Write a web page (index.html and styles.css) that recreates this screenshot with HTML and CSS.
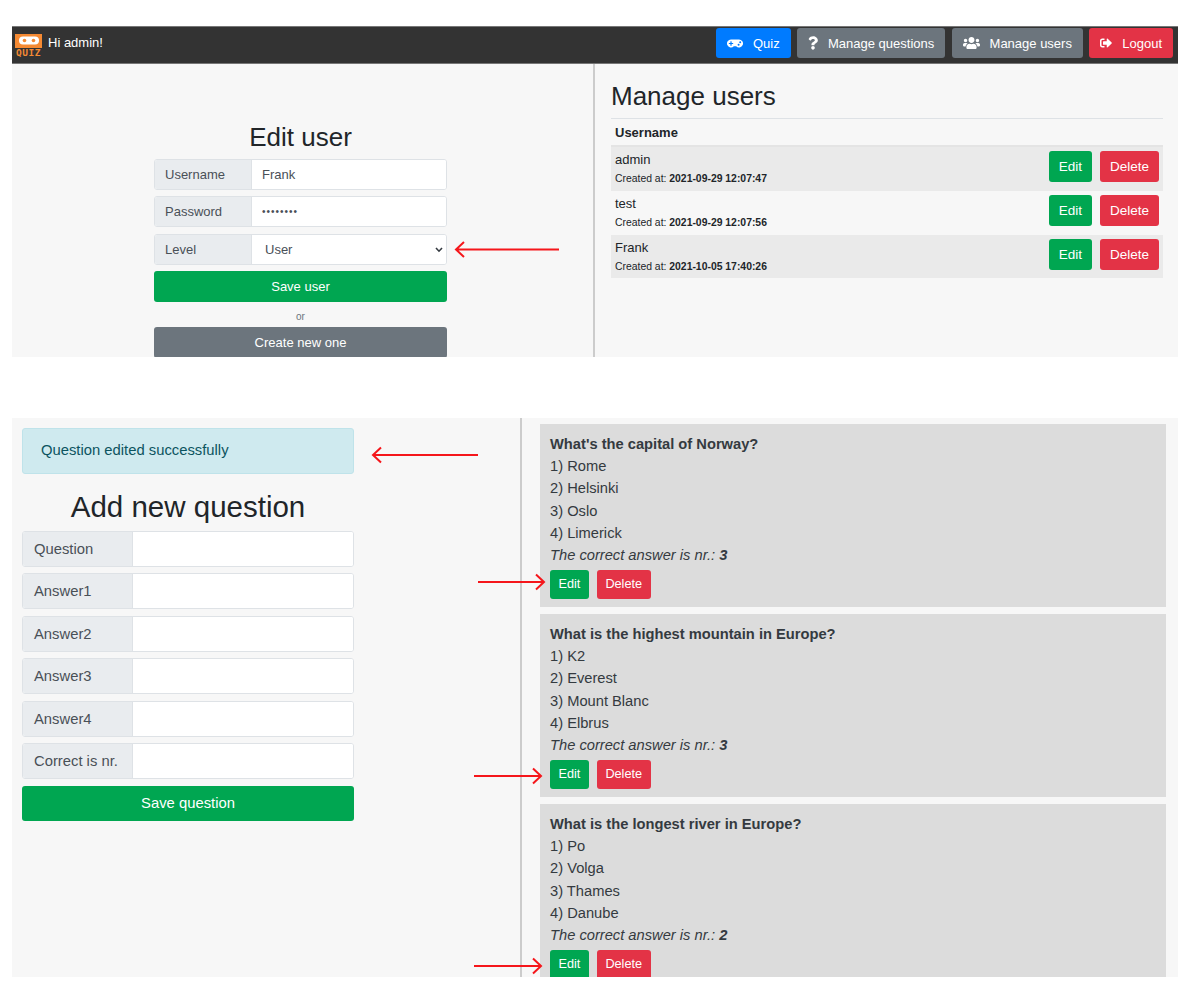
FILE: index.html
```html
<!DOCTYPE html>
<html lang="en">
<head>
  <meta charset="UTF-8">
  <title>Quiz admin</title>
  <link rel="stylesheet" href="styles.css">
</head>
<body>

  <!-- first screenshot: manage users -->
  <section class="panel panel-users">
    <nav class="navbar">
      <div class="brand">
        <div class="logo">
          <div class="logo-pad">
            <svg width="20" height="9" viewBox="0 0 20 9"><rect width="20" height="8" y="0.500" rx="4" fill="#fff"/><circle cx="5.500" cy="4.500" r="1.800" fill="#f58a33"/><circle cx="14.500" cy="4.500" r="1.800" fill="#f58a33"/></svg>
          </div>
          <div class="logo-text">QUIZ</div>
        </div>
        <span class="hello">Hi admin!</span>
      </div>
      <div class="nav-links">
        <a class="nav-btn blue">
          <svg class="icon" width="16" height="13" viewBox="0 0 640 512"><path d="M480.07 96H160a160 160 0 1 0 114.24 272h91.52A160 160 0 1 0 480.07 96zM248 268a12 12 0 0 1-12 12h-52v52a12 12 0 0 1-12 12h-24a12 12 0 0 1-12-12v-52H84a12 12 0 0 1-12-12v-24a12 12 0 0 1 12-12h52v-52a12 12 0 0 1 12-12h24a12 12 0 0 1 12 12v52h52a12 12 0 0 1 12 12zm216 76a40 40 0 1 1 40-40 40 40 0 0 1-40 40zm64-96a40 40 0 1 1 40-40 40 40 0 0 1-40 40z"/></svg>
          Quiz
        </a>
        <a class="nav-btn grey">
          <svg class="icon" width="10" height="14" viewBox="0 0 384 512"><path d="M202.021 0C122.202 0 70.503 32.703 29.914 91.026c-7.363 10.58-5.093 25.086 5.178 32.874l43.138 32.709c10.373 7.865 25.132 6.026 33.253-4.148 25.049-31.381 43.63-49.449 82.757-49.449 30.764 0 68.816 19.799 68.816 49.631 0 22.552-18.617 34.134-48.993 51.164-35.423 19.86-82.299 44.576-82.299 106.405V320c0 13.255 10.745 24 24 24h72.471c13.255 0 24-10.745 24-24v-5.773c0-42.86 125.268-44.645 125.268-160.627C377.504 66.256 286.902 0 202.021 0zM192 373.459c-38.196 0-69.271 31.075-69.271 69.271 0 38.195 31.075 69.27 69.271 69.27s69.271-31.075 69.271-69.271-31.075-69.27-69.271-69.27z"/></svg>
          Manage questions
        </a>
        <a class="nav-btn grey">
          <svg class="icon" width="17" height="14" viewBox="0 0 640 512"><path d="M96 224c35.3 0 64-28.7 64-64s-28.7-64-64-64-64 28.7-64 64 28.7 64 64 64zm448 0c35.3 0 64-28.7 64-64s-28.7-64-64-64-64 28.7-64 64 28.7 64 64 64zm32 32h-64c-17.6 0-33.5 7.1-45.1 18.6 40.3 22.1 68.9 62 75.1 109.4h66c17.7 0 32-14.3 32-32v-32c0-35.3-28.7-64-64-64zm-256 0c61.9 0 112-50.1 112-112S381.9 32 320 32 208 82.1 208 144s50.1 112 112 112zm76.8 32h-8.3c-20.8 10-43.9 16-68.5 16s-47.6-6-68.5-16h-8.3C179.6 288 128 339.6 128 403.2V432c0 26.5 21.5 48 48 48h288c26.5 0 48-21.5 48-48v-28.8c0-63.6-51.6-115.2-115.2-115.2zm-223.7-13.4C161.5 263.1 145.6 256 128 256H64c-35.3 0-64 28.7-64 64v32c0 17.7 14.3 32 32 32h65.9c6.3-47.4 34.9-87.3 75.2-109.4z"/></svg>
          Manage users
        </a>
        <a class="nav-btn red">
          <svg class="icon" width="12" height="12" viewBox="0 0 512 512"><path d="M497 273L329 441c-15 15-41 4.500-41-17v-96H152c-13.300 0-24-10.700-24-24v-96c0-13.300 10.700-24 24-24h136V88c0-21.400 25.900-32 41-17l168 168c9.300 9.400 9.300 24.600 0 34zM192 436v-40c0-6.600-5.400-12-12-12H96c-17.700 0-32-14.300-32-32V160c0-17.700 14.300-32 32-32h84c6.600 0 12-5.400 12-12V76c0-6.600-5.400-12-12-12H96c-53 0-96 43-96 96v192c0 53 43 96 96 96h84c6.600 0 12-5.400 12-12z"/></svg>
          Logout
        </a>
      </div>
    </nav>

    <div class="users-body">
      <div class="users-left">
        <form class="user-form">
          <h2 class="user-title">Edit user</h2>
          <div class="group">
            <label class="group-label">Username</label>
            <input class="group-input" type="text" value="Frank">
          </div>
          <div class="group">
            <label class="group-label">Password</label>
            <input class="group-input password" type="password" value="12345678">
          </div>
          <div class="group">
            <label class="group-label">Level</label>
            <div class="select-wrap">
              <select class="group-select"><option>User</option><option>Admin</option></select>
              <svg class="chevron" width="8" height="6" viewBox="0 0 8 6"><path d="M1 1l3 3.200L7 1" fill="none" stroke="#343a40" stroke-width="1.600"/></svg>
            </div>
          </div>
          <button type="button" class="btn-wide green">Save user</button>
          <div class="or">or</div>
          <button type="button" class="btn-wide dark-grey">Create new one</button>
        </form>
      </div>

      <div class="users-right">
        <h2 class="list-title">Manage users</h2>
        <div class="list-head">Username</div>
        <div class="user-row shaded">
          <div>
            <div class="user-name">admin</div>
            <div class="user-date">Created at: <b>2021-09-29 12:07:47</b></div>
          </div>
          <div class="row-btns"><a class="btn green">Edit</a><a class="btn red">Delete</a></div>
        </div>
        <div class="user-row">
          <div>
            <div class="user-name">test</div>
            <div class="user-date">Created at: <b>2021-09-29 12:07:56</b></div>
          </div>
          <div class="row-btns"><a class="btn green">Edit</a><a class="btn red">Delete</a></div>
        </div>
        <div class="user-row shaded">
          <div>
            <div class="user-name">Frank</div>
            <div class="user-date">Created at: <b>2021-10-05 17:40:26</b></div>
          </div>
          <div class="row-btns"><a class="btn green">Edit</a><a class="btn red">Delete</a></div>
        </div>
      </div>
    </div>
  </section>

  <!-- second screenshot: manage questions -->
  <section class="panel panel-questions">
    <div class="questions-left">
      <div class="alert">Question edited successfully</div>
      <h2 class="question-title">Add new question</h2>
      <div class="group big"><label class="group-label">Question</label><input class="group-input" type="text"></div>
      <div class="group big"><label class="group-label">Answer1</label><input class="group-input" type="text"></div>
      <div class="group big"><label class="group-label">Answer2</label><input class="group-input" type="text"></div>
      <div class="group big"><label class="group-label">Answer3</label><input class="group-input" type="text"></div>
      <div class="group big"><label class="group-label">Answer4</label><input class="group-input" type="text"></div>
      <div class="group big"><label class="group-label">Correct is nr.</label><input class="group-input" type="text"></div>
      <button type="button" class="btn-wide big green">Save question</button>
    </div>

    <div class="questions-right">
      <div class="card">
        <div class="card-title">What's the capital of Norway?</div>
        <div>1) Rome</div>
        <div>2) Helsinki</div>
        <div>3) Oslo</div>
        <div>4) Limerick</div>
        <div class="card-correct">The correct answer is nr.: <b>3</b></div>
        <div class="card-btns"><a class="btn small green">Edit</a><a class="btn small red">Delete</a></div>
      </div>
      <div class="card">
        <div class="card-title">What is the highest mountain in Europe?</div>
        <div>1) K2</div>
        <div>2) Everest</div>
        <div>3) Mount Blanc</div>
        <div>4) Elbrus</div>
        <div class="card-correct">The correct answer is nr.: <b>3</b></div>
        <div class="card-btns"><a class="btn small green">Edit</a><a class="btn small red">Delete</a></div>
      </div>
      <div class="card">
        <div class="card-title">What is the longest river in Europe?</div>
        <div>1) Po</div>
        <div>2) Volga</div>
        <div>3) Thames</div>
        <div>4) Danube</div>
        <div class="card-correct">The correct answer is nr.: <b>2</b></div>
        <div class="card-btns"><a class="btn small green">Edit</a><a class="btn small red">Delete</a></div>
      </div>
    </div>
  </section>

  <!-- red arrows drawn on top of the screenshots -->
  <svg class="arrows" width="1190" height="998" viewBox="0 0 1190 998" fill="none" stroke="#f5161b" stroke-width="2">
    <path d="M559 249.500H456M464 242l-8 7.500 8 7.500"/>
    <path d="M478 455H373M381 447.500l-8 7.500 8 7.500"/>
    <path d="M478 582H543M536 574.500l8 7.500-8 7.500"/>
    <path d="M474 776H540M533 768.500l8 7.500-8 7.500"/>
    <path d="M474 966H540M533 958.500l8 7.500-8 7.500"/>
  </svg>

</body>
</html>
```

FILE: styles.css
```css
body {
  margin: 0;
  background-color: #fff;
  font-family: "Liberation Sans", Arial, sans-serif;
  color: #212529;
  position: relative;
  height: 998px;
  overflow: hidden;
}
.panel {
  width: 1166px;
  margin-left: 12px;
  background-color: #f7f7f7;
  overflow: hidden;
}
.panel-users {
  margin-top: 26px;
  height: 331px;
}
.panel-questions {
  margin-top: 61px;
  height: 559px;
  display: flex;
}

/* navbar */
.navbar {
  height: 38px;
  box-sizing: border-box;
  background-color: #333;
  border-top: 1px solid #777;
  border-bottom: 1px solid #777;
  display: flex;
  justify-content: space-between;
  align-items: center;
  padding: 0 5px 4px 3px;
}
.brand {
  display: flex;
  align-items: center;
  gap: 6px;
  color: #fff;
  font-size: 13px;
}
.hello {
  margin-bottom: 1px;
}
.logo {
  width: 27px;
  margin-top: 4px;
}
.logo-pad {
  height: 14px;
  background-color: #f58a33;
  display: flex;
  justify-content: center;
  align-items: center;
}
.logo-text {
  color: #f58a33;
  font-family: "DejaVu Sans Mono", monospace;
  font-weight: bold;
  font-size: 9.500px;
  line-height: 9px;
  text-align: center;
  letter-spacing: 0.500px;
}
.nav-links {
  display: flex;
  gap: 6.300px;
}
.nav-btn {
  height: 30px;
  box-sizing: border-box;
  border-radius: 3px;
  color: #fff;
  font-size: 13px;
  display: flex;
  align-items: center;
  padding: 0 11px;
}
.icon {
  fill: #fff;
  margin-right: 10px;
}
.blue { background-color: #007bff; }
.grey { background-color: #6c757d; }
.red { background-color: #e33346; }
.green { background-color: #00a651; }
.dark-grey { background-color: #6c757d; }

/* edit user */
.users-body {
  display: flex;
  height: 293px;
}
.users-left {
  width: 581px;
  border-right: 2px solid #ccc;
  box-sizing: content-box;
}
.user-form {
  width: 293px;
  margin: 59px 0 0 142px;
}
.user-title {
  margin: 0 0 7px;
  font-size: 26px;
  font-weight: 400;
  line-height: 29px;
  text-align: center;
}
.group {
  display: flex;
  height: 31px;
  margin-bottom: 6.400px;
  box-sizing: border-box;
  border: 1px solid #dee2e6;
  border-radius: 3px;
  overflow: hidden;
  background-color: #fff;
  font-size: 13px;
  color: #495057;
}
.group-label {
  width: 97px;
  flex: none;
  box-sizing: border-box;
  padding-left: 10px;
  background-color: #e9ecef;
  border-right: 1px solid #dee2e6;
  display: flex;
  align-items: center;
}
.group-input, .group-select {
  flex: 1;
  min-width: 0;
  width: 100%;
  border: 0;
  outline: 0;
  padding: 0 10px;
  background: #fff;
  color: #495057;
  font-family: inherit;
  font-size: 13px;
}
.password {
  font-size: 10px;
  letter-spacing: 1px;
}
.select-wrap {
  flex: 1;
  position: relative;
}
.group-select {
  height: 100%;
  padding-left: 13px;
  appearance: none;
}
.chevron {
  position: absolute;
  right: 3px;
  top: 12px;
}
.btn-wide {
  display: block;
  width: 100%;
  height: 31px;
  border: 0;
  border-radius: 3px;
  color: #fff;
  font-family: inherit;
  font-size: 13px;
  cursor: pointer;
}
.or {
  height: 25px;
  line-height: 29px;
  text-align: center;
  font-size: 10px;
  color: #6c757d;
}

/* user list */
.users-right {
  flex: 1;
  padding: 0 15px 0 16px;
}
.list-title {
  margin: 0;
  height: 55px;
  box-sizing: border-box;
  padding-top: 17px;
  border-bottom: 1px solid #dee2e6;
  font-size: 26px;
  line-height: 30px;
  font-weight: 400;
}
.list-head {
  height: 28px;
  line-height: 27px;
  padding-left: 4px;
  border-bottom: 2px solid #e4e4e4;
  box-sizing: border-box;
  font-size: 13px;
  font-weight: bold;
}
.user-row {
  height: 43.800px;
  display: flex;
  justify-content: space-between;
  align-items: center;
  padding: 0 4px;
}
.shaded { background-color: #eaeaea; }
.user-name {
  font-size: 13px;
  line-height: 17px;
}
.user-date {
  font-size: 10.400px;
  line-height: 15px;
  margin-top: 3px;
}
.row-btns {
  display: flex;
  gap: 8px;
  align-self: flex-start;
  margin-top: 4px;
}
.btn {
  height: 31px;
  box-sizing: border-box;
  padding: 0 10px;
  border-radius: 3px;
  color: #fff;
  font-size: 13.500px;
  display: flex;
  align-items: center;
}

/* add question */
.questions-left {
  width: 510px;
  flex: none;
  box-sizing: border-box;
  padding: 10px 166px 0 10px;
  border-right: 2px solid #ccc;
}
.alert {
  height: 46px;
  box-sizing: border-box;
  padding-left: 18px;
  line-height: 43px;
  background-color: #cfeaef;
  border: 1px solid #bfe3ea;
  border-radius: 3px;
  color: #0c5460;
  font-size: 14.800px;
}
.question-title {
  margin: 17px 0 7.500px;
  font-size: 29.500px;
  line-height: 32px;
  font-weight: 400;
  text-align: center;
}
.group.big {
  height: 36px;
  margin-bottom: 6.500px;
  font-size: 14.800px;
}
.group.big .group-label {
  width: 110px;
  padding-left: 11px;
}
.btn-wide.big {
  height: 35.500px;
  font-size: 14.800px;
}

/* question cards */
.questions-right {
  flex: 1;
  padding: 6px 12px 0 18px;
}
.card {
  height: 183px;
  margin-bottom: 7px;
  box-sizing: border-box;
  padding: 9px 10px 0;
  background-color: #dcdcdc;
  font-size: 14.700px;
  line-height: 22.200px;
  color: #343a40;
}
.card-title { font-weight: bold; }
.card-correct { font-style: italic; }
.card-btns {
  display: flex;
  gap: 8px;
  margin-top: 3.500px;
}
.btn.small {
  height: 29px;
  padding: 0 8.500px;
  font-size: 12.700px;
}

.arrows {
  position: absolute;
  left: 0;
  top: 0;
  pointer-events: none;
}
```
